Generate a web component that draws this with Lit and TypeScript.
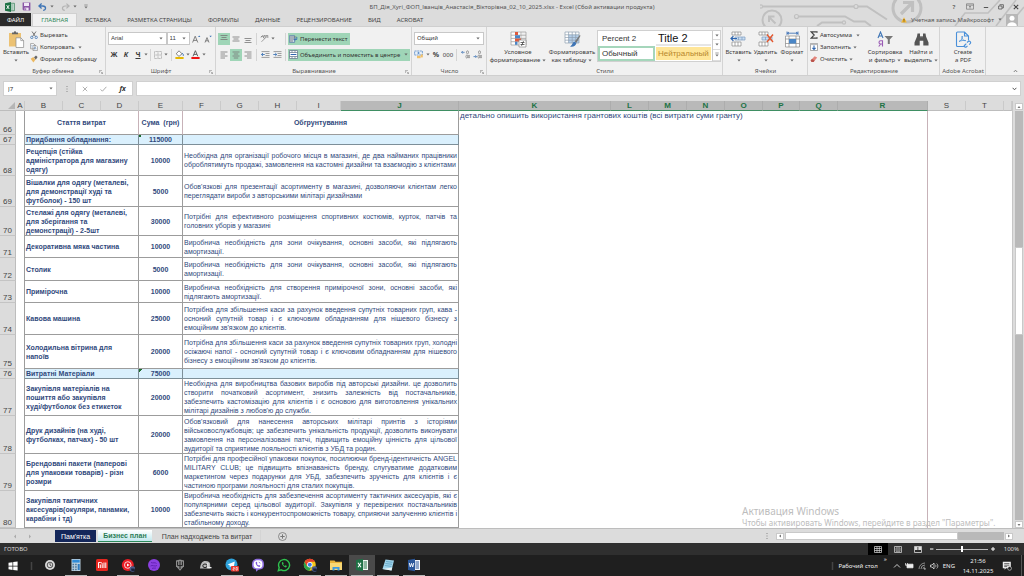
import { LitElement, html, svg, css, nothing } from "lit";
import { customElement, state } from "lit/decorators.js";
import { classMap } from "lit/directives/class-map.js";

const icon = (w: number, h: number, body: unknown) =>
  html`<svg class="ic" width=${w} height=${h} viewBox="0 0 ${w} ${h}" aria-hidden="true">${body}</svg>`;

const caret = icon(4, 3, svg`<path d="M0.4 .5h3.2L2 2.4z" fill="#666"/>`);

/* ---------- title bar ---------- */
const excelLogo = icon(10, 10, svg`<path d="M5 1.3h4.4v7.4H5z" fill="#fff" stroke="#217346" stroke-width=".7"/><path d="M6 3h2.6M6 5h2.6M6 7h2.6" stroke="#217346" stroke-width=".8"/><path d="M0 1.2 6 0v10L0 8.8z" fill="#1e7145"/><path d="M1.6 3.1 4.2 7M4.2 3.1 1.6 7" stroke="#fff" stroke-width=".9"/>`);
const save = icon(9, 9, svg`<path d="M.6.6h7.8v7.8H1.6l-1-1z" fill="#8a55a5"/><path d="M2 .8h5v3.2H2z" fill="#efe6f4"/><path d="M2.6 5.6h4v2.8h-4z" fill="#efe6f4"/><path d="M3.2 6.2h1v2h-1z" fill="#8a55a5"/>`);
const undo = icon(9, 8, svg`<path d="M3.6.6.9 3l2.7 2.4M1.2 3h3.6c3.6 0 3.6 4.2.4 4.4" fill="none" stroke="#3f75b5" stroke-width="1.3"/>`);
const redo = icon(9, 8, svg`<path d="M5.4.6 8.1 3 5.4 5.4M7.8 3H4.2C.6 3 .6 7.2 3.8 7.4" fill="none" stroke="#b4b4b4" stroke-width="1.2"/>`);
const customize = icon(4, 5, svg`<path d="M.3 1h3.4" stroke="#777" stroke-width=".7"/><path d="M.3 2.5h3.4L2 4.5z" fill="#777"/>`);
const ribbonOpts = icon(8, 7, svg`<path d="M.5.8h7v5.4h-7zM.5 2.200h7" fill="none" stroke="#777" stroke-width=".7"/><path d="M4 5.600V3.200M3 4l1-1 1 1" fill="none" stroke="#777" stroke-width=".7"/>`);
const minimize = icon(6, 6, svg`<path d="M.8 3.500h4.400" stroke="#555" stroke-width="1"/>`);
const restore = icon(6, 6, svg`<path d="M1.800 1.600V.7h3.600v3.200H4.200M.6 2h3.400v3H.6z" fill="none" stroke="#555" stroke-width=".8"/>`);
const closeX = icon(6, 6, svg`<path d="M.8.8l4.400 4.400M5.200.8.8 5.200" stroke="#444" stroke-width="1.1"/>`);
const warning = icon(6, 6, svg`<path d="M3 .3 5.800 5.600H.2z" fill="#f2b632"/><path d="M3 2v1.800M3 4.400v.7" stroke="#4a3500" stroke-width=".7"/>`);
const avatar = icon(12, 12, svg`<path d="M0 0h12v12H0z" fill="#b7b7b7"/><circle cx="6" cy="4.200" r="2.500" fill="#fff"/><path d="M1.200 12c0-5 9.600-5 9.600 0z" fill="#fff"/>`);

const circuit = html`<svg class="circuit" width="264" height="26" viewBox="0 0 264 26" aria-hidden="true">
  <g fill="none" stroke="#c0c0c0" stroke-width="2">
    <circle cx="1" cy="6.500" r="1.600" stroke-width="1.200"/><path d="M3 6.500h91M98 6.500h9l20 13"/><circle cx="96" cy="6.500" r="2" stroke-width="1.200"/>
    <circle cx="12" cy="20" r="9.500"/><path d="M15.500 23.500 9 17M9 22v-5.500h5.500"/>
    <circle cx="36.500" cy="16.500" r="2" stroke-width="1.200"/><path d="M39 16.500h46l9 5h11l6 4.500M57 26l5-3.500h20"/><circle cx="84" cy="22.500" r="1.600" stroke-width="1.200"/>
    <circle cx="147" cy="8" r="14" stroke-width="3"/><path d="m141 14 11-11M143 2.500h9.500V12" stroke-width="3.200"/>
    <path d="M195 26l10-13h23l12-13M236 26l20-26M248 26l16-19" stroke-width="1.600"/>
  </g></svg>`;

/* ---------- ribbon ---------- */
const paste = icon(17, 17, svg`<path d="M1 2h12v13.500H1z" fill="#ecc274"/><path d="M4 3.200V1.500h1.800a1.200 1.200 0 0 1 2.400 0H10v1.700z" fill="#666"/><path d="M8 6.800h4.800l2.800 2.800v6.900H8z" fill="#fff" stroke="#8a8a8a" stroke-width=".7"/><path d="M12.800 6.800v2.800h2.800" fill="none" stroke="#8a8a8a" stroke-width=".7"/>`);
const cut = icon(8, 8, svg`<path d="M2 .5 5.400 5.400M6 .5 2.600 5.400" stroke="#666" stroke-width=".9"/><circle cx="1.800" cy="6.400" r="1.200" fill="none" stroke="#3f75b5" stroke-width=".8"/><circle cx="6.200" cy="6.400" r="1.200" fill="none" stroke="#3f75b5" stroke-width=".8"/>`);
const copy = icon(8, 8, svg`<path d="M.6.6h3l1.400 1.400v3.800H.6zM3 2.400h3l1.400 1.400v3.800H3z" fill="#fff" stroke="#777" stroke-width=".6"/><path d="M3.900 4.400h2M3.900 5.800h2.600M1.400 2.500h1M1.400 4h1" stroke="#5b8cc7" stroke-width=".6"/>`);
const painter = icon(8, 8, svg`<path d="M.6 3.800 3.400 2l2 2.800-2 2.800z" fill="#ecb860"/><path d="m4 2.200 1.800 2.600L7.600 2 6 .4z" fill="#666"/>`);
const growA = icon(9, 8, svg`<path d="M.6 7.500 3.200 1.200 5.800 7.500M1.500 5.400h3.400" fill="none" stroke="#666" stroke-width=".8"/><path d="M6 2 7.200.6 8.400 2z" fill="#3f75b5"/>`);
const shrinkA = icon(9, 8, svg`<path d="M1 7.500 3 2.600 5 7.500M1.700 5.800h2.600" fill="none" stroke="#666" stroke-width=".8"/><path d="M5.400.8h2.400L6.600 2.200z" fill="#3f75b5"/>`);
const borders = icon(8, 8, svg`<path d="M.5.5h7v7h-7zM4 .5v7M.5 4h7" fill="none" stroke="#aaa" stroke-width=".8" stroke-dasharray="1 .4"/>`);
const fill = icon(9, 9, svg`<path d="m4 .8 3 3L4 6.400 1.200 3.800z" fill="#fff" stroke="#666" stroke-width=".8"/><path d="M7.200 3.200c1.400 1 1.400 2.400.8 2.800" stroke="#3f75b5" fill="none"/><path d="M.4 7h8.200v2H.4z" fill="#e6b800"/>`);
const fontColor = icon(9, 9, svg`<path d="M2 6.300 4.400.7l2.400 5.600M2.900 4.400h3" fill="none" stroke="#555" stroke-width=".9"/><path d="M.4 7h8.200v2H.4z" fill="#f01414"/>`);
const lines = (spec: [number, number, number][]) =>
  icon(8, 8, svg`${spec.map(([x, y, w]) => svg`<path d="M${x} ${y}h${w}" stroke="#777" stroke-width=".8"/>`)}`);
const alTop = lines([[0.5, 0.5, 7], [1.5, 2.5, 5], [0.5, 4.5, 7]]);
const alMid = lines([[0.5, 2, 7], [1.5, 4, 5], [0.5, 6, 7]]);
const alBot = lines([[0.5, 3.5, 7], [1.5, 5.5, 5], [0.5, 7.5, 7]]);
const alLeft = lines([[0.5, 1, 7], [0.5, 3, 4.5], [0.5, 5, 7], [0.5, 7, 4.5]]);
const alCenter = lines([[0.5, 1, 7], [1.8, 3, 4.4], [0.5, 5, 7], [1.8, 7, 4.4]]);
const alRight = lines([[0.5, 1, 7], [3, 3, 4.5], [0.5, 5, 7], [3, 7, 4.5]]);
const orient = icon(9, 9, svg`<path d="M1.500 7.800 7.500 1.800M7.800 4V1.500H5.300" fill="none" stroke="#888" stroke-width=".8"/><path d="m.8 3.200 2-1.400 1.400 2.600M3.800 1l2 2.400" fill="none" stroke="#555" stroke-width=".8"/>`);
const indent = (flip: boolean) => icon(9, 7, svg`<path d="M.5.6h8M4.500 2.500h4M4.500 4.500h4M.5 6.400h8" stroke="#888" stroke-width=".8"/><path d=${flip ? "M.3 3.500h3.400M2.200 2l1.600 1.500L2.200 5" : "M3.800 3.500H.5M2 2 .4 3.500 2 5"} fill="none" stroke="#3f75b5" stroke-width=".9"/>`);
const wrap = icon(9, 8, svg`<path d="M.5.5h5v7h-5z" fill="#c8d8e8" stroke="#5b7fa8" stroke-width=".7"/><path d="M1 2h6.500M1 4h4M1 6h3" stroke="#666" stroke-width=".7"/><path d="M7.800 2v2.500H5.500M6.500 3.200 5.200 4.500l1.300 1.300" fill="none" stroke="#2f66b0" stroke-width=".8"/>`);
const merge = icon(9, 9, svg`<path d="M.5.5h8v8h-8zM.5 2.500h8M.5 6.500h8M3 .5v2M6 .5v2M3 6.500v2M6 6.500v2" fill="#fff" stroke="#5f7388" stroke-width=".7"/><path d="M1.600 4.500h5.800" stroke="#2f66b0"/>`);
const currency = icon(10, 9, svg`<path d="M.6 1h7.800v4H.6z" fill="#e8f0f8" stroke="#5b8cc7" stroke-width=".8" stroke-dasharray="2 .6"/><circle cx="4.500" cy="3" r="1" fill="#5b8cc7"/><path d="M3 5.800h3.600v2.400H3z" fill="#f0c069"/><path d="M6.800 4.400h2v3h-2z" fill="#f0c069"/>`);
const decimals = (up: boolean) => icon(9, 9, svg`<path d=${up ? "M3.600 2.300H.6M1.800 1 .5 2.300l1.300 1.300" : "M.5 6.600h3M2.400 5.300l1.300 1.300-1.300 1.300"} fill="none" stroke="#3f75b5" stroke-width=".8"/><g fill="none" stroke="#777" stroke-width=".7"><ellipse cx="6.500" cy="2.300" rx="1" ry="1.500"/><ellipse cx="5.800" cy="6.600" rx=".9" ry="1.500"/><ellipse cx="8" cy="6.600" rx=".7" ry="1.500"/></g>`);
const condFmt = icon(17, 17, svg`<path d="M1 1h11v13H1z" fill="#fff"/><path d="M1 1h15v13H1zM1 4.200h15M1 7.400h15M1 10.700h15M6 1v13M11 1v13" fill="none" stroke="#9a9a9a" stroke-width=".7"/><path d="M5 1h3v3H5zM5 7.600h6v3H5z" fill="#e0593c"/><path d="M5 4.300h5v3H5zM5 10.800h2.500v3H5z" fill="#4b86c6"/><path d="M9 9h7v7H9z" fill="#fff" stroke="#888" stroke-width=".7"/><path d="M10.500 11.500h4M10.500 13.500h4M13.500 10.200l-2 4.600" stroke="#444" stroke-width=".8"/>`);
const fmtTable = icon(17, 17, svg`<path d="M1 1h14v11H1z" fill="#fff"/><path d="M4.600 3.800H15V12H4.600z" fill="#b5cfea"/><path d="M1 1h14v11H1zM1 3.800h14M1 6.500h14M1 9.200h14M4.600 1v11M8.200 1v11M11.700 1v11" fill="none" stroke="#8e9fb0" stroke-width=".7"/><path d="m15.800 4-5 6.500 1.700 1.200 4-7z" fill="#777"/><path d="M10.600 10.800c-2.600.6-2 3.600-4.600 4.700 3 .8 6-.6 6.400-3.400z" fill="#3f75b5"/>`);
const cellIcon = (kind: string) => icon(17, 17, svg`<path d="M2 1h9v3H2zM5 1v3M8 1v3M2 11h9v4H2zM5 11v4M8 11v4" fill="#fff" stroke="#888" stroke-width=".7"/><path d="M5 6h10v3H5zM8.500 6v3M12 6v3" fill="#c9ddf2" stroke="#7c9cc0" stroke-width=".7"/>${kind === "insert"
  ? svg`<path d="M7 7.500H1M3.400 5.200 1 7.500l2.400 2.300" fill="none" stroke="#2f66b0" stroke-width="1.200"/>`
  : svg`<path d="m10 3.500 6 7.500M16 3.500 10 11" stroke="#e4572e" stroke-width="1.400"/>`}`);
const formatIcon = icon(17, 17, svg`<path d="M1.500 5h14v11h-14z" fill="#fff"/><path d="M1.500 5h14v11h-14zM1.500 8h14M1.500 12.500h14M5 5v11M12 5v11" fill="none" stroke="#888" stroke-width=".7"/><path d="M5 8h7v4.500H5z" fill="#4b86c6"/><path d="M3 2.200h11M3 .5v3.400M14 .5v3.400M5 1 3.500 2.200 5 3.400M12 1l1.500 1.200L12 3.400" fill="none" stroke="#2f66b0" stroke-width=".8"/>`);
const sigma = icon(8, 8, svg`<path d="M7 1.800V.8H1.200L4.200 4 1.200 7.200H7v-1" fill="none" stroke="#444" stroke-width="1.200"/>`);
const fillDown = icon(8, 8, svg`<path d="M.5.5h7v7h-7z" fill="#fff" stroke="#888" stroke-width=".7"/><path d="M.5.5h7v1.600h-7z" fill="#bbb"/><path d="M4 2.600v3.800M2.400 4.800 4 6.400l1.600-1.600" fill="none" stroke="#2f66b0" stroke-width="1.100"/>`);
const eraser = icon(8, 8, svg`<path d="m.6 5.400 4-4.200L7.200 2.600 3.600 7H1.600z" fill="#e2867c"/><path d="m.6 5.400 1.300-1.400 2.800 1.600L3.600 7H1.600z" fill="#b9534c"/>`);
const sortIcon = icon(17, 17, svg`<path d="M1 7 3.500 1 6 7M2 5h3" fill="none" stroke="#3f75b5" stroke-width="1.100"/><path d="M5.500 15.500V9.800H3.600a1.600 1.600 0 0 0 0 3.200h1.900M3.700 13l-2 2.500" fill="none" stroke="#9a5bb5" stroke-width="1.100"/><path d="M7.500 5H16l-3.200 3.600V13h-2V8.600z" fill="#777"/>`);
const binoc = icon(17, 17, svg`<path d="M4.500 2.500H7v3h3v-3h2.500l.5 3 2.500 6v3h-5.200V9.800H6.700v4.700H1.500v-3L4 5.500z" fill="#555"/><path d="M7 5.800h3" stroke="#888"/>`);
const pdf = icon(17, 17, svg`<path d="M9 15.500H2.500a1 1 0 0 1-1-1V2a1 1 0 0 1 1-1h7l4 4v4.500M9.500 1v4h4" fill="none" stroke="#4a90d9" stroke-width="1.100"/><path d="M4 10.500c3-1.500 3.500-3.500 3.200-5.500-.8 3 1.300 5 3.600 4.600-2.500-.6-5 .2-6.800.9z" fill="none" stroke="#4a90d9" stroke-width=".8"/><path d="m9.500 14.500 1.800-1.800M12 11.500l1.200-1c1.500-1 3.200.8 2 2l-1 1.200M12.500 14.800l-1 1c-1.300 1-2.800-.3-2-1.800" fill="none" stroke="#4a90d9" stroke-width="1.100"/>`);
const launcher = icon(4, 4, svg`<path d="M.4 3V.4H3" fill="none" stroke="#888" stroke-width=".6"/><path d="M1.600 1.600l2 2M3.700 2v1.700H2" fill="none" stroke="#888" stroke-width=".6"/>`);

/* ---------- sheet ---------- */
interface Row { n: number; h: number; item: string[]; sum: string; why: string[]; head?: boolean; }
const rows: Row[] = [
  { n: 67, h: 10, item: ["Придбання обладнання:"], sum: "115000", why: [], head: true },
  { n: 68, h: 31, item: ["Рецепція (стійка", "адміністратора для магазину", "одягу)"], sum: "10000", why: ["Необхідна для організації робочого місця в магазині, де два найманих працівники", "оброблятимуть продажі, замовлення на кастомні дизайни та взаємодію з клієнтами"] },
  { n: 69, h: 31, item: ["Вішалки для одягу (металеві,", "для демонстрації худі та", "футболок) - 150 шт"], sum: "5000", why: ["Обов'язкові для презентації асортименту в магазині, дозволяючи клієнтам легко", "переглядати вироби з авторськими мілітарі дизайнами"] },
  { n: 70, h: 29, item: ["Стелажі для одягу (металеві,", "для зберігання та", "демонстрації) - 2-5шт"], sum: "30000", why: ["Потрібні для ефективного розміщення спортивних костюмів, курток, патчів та", "головних уборів у магазині"] },
  { n: 71, h: 22, item: ["Декоративна мяка частина"], sum: "10000", why: ["Виробнича необхідність для зони очікування, основні засоби, які підлягають", "амортизації."] },
  { n: 72, h: 23, item: ["Столик"], sum: "5000", why: ["Виробнича необхідність для зони очікування, основні засоби, які підлягають", "амортизації."] },
  { n: 73, h: 22, item: ["Примірочна"], sum: "10000", why: ["Виробнича необхідність для створення примірочної зони, основні засоби, які", "підлягають амортизації."] },
  { n: 74, h: 32, item: ["Кавова машина"], sum: "25000", why: ["Потрібна для збільшення каси за рахунок введення супутніх товарних груп, кава -", "осноний супутній товар і є ключовим обладнанням для нішевого бізнесу з", "емоційним зв'язком до клієнтів."] },
  { n: 75, h: 34, item: ["Холодильна вітрина для", "напоїв"], sum: "20000", why: ["Потрібна для збільшення каси за рахунок введення супутніх товарних груп, холодні", "осіжаючі напої - осноний супутній товар і є ключовим обладнанням для нішевого", "бізнесу з емоційним зв'язком до клієнтів."] },
  { n: 76, h: 10, item: ["Витратні Матеріали"], sum: "75000", why: [], head: true },
  { n: 77, h: 37, item: ["Закупівля матеріалів на", "пошиття або закупівля", "худі/футболок без етикеток"], sum: "20000", why: ["Необхідна для виробництва базових виробів під авторські дизайни. це дозволить", "створити початковий асортимент, знизить залежність від постачальників,", "забезпечить кастомізацію для клієнтів і є основою для виготовлення унікальних", "мілітарі дизайнів з любов'ю до служби."] },
  { n: 78, h: 38, item: ["Друк дизайнів (на худі,", "футболках, патчах) - 50 шт"], sum: "20000", why: ["Обов'язковий для нанесення авторських мілітарі принтів з історіями", "військовослужбовців; це забезпечить унікальність продукції, дозволить виконувати", "замовлення на персоналізовані патчі, підвищить емоційну цінність для цільової", "аудиторії та сприятиме лояльності клієнтів з УБД та родин."] },
  { n: 79, h: 37, item: ["Брендовані пакети (паперові", "для упаковки товарів) - різн", "розмри"], sum: "6000", why: ["Потрібні для професійної упаковки покупок, посилюючи бренд-ідентичність ANGEL", "MILITARY CLUB; це підвищить впізнаваність бренду, слугуватиме додатковим", "маркетингом через подарунки для УБД, забезпечить зручність для клієнтів і є", "частиною програми лояльності для сталих покупців."] },
  { n: 80, h: 37, item: ["Закупівля тактичних", "аксесуарів(окуляри, панамки,", "карабіни і тд)"], sum: "10000", why: ["Виробнича необхідність для забезпечення асортименту тактичних аксесуарів, які є", "популярними серед цільової аудиторії. Закупівля у перевірених постачальників", "забезпечить якість і конкурентоспроможність товару, сприяючи залученню клієнтів і", "стабільному доходу."] },
];
const cols: [string, number][] = [["A", 9], ["B", 38], ["C", 38], ["D", 38], ["E", 44], ["F", 38], ["G", 38], ["H", 38], ["I", 44], ["J", 118], ["K", 152], ["L", 38], ["M", 38], ["N", 38], ["O", 38], ["P", 37], ["Q", 38], ["R", 90], ["S", 38], ["T", 38]];

/* ---------- task bar ---------- */
const badge = svg`<circle cx="11.500" cy="11" r="2.800" fill="#4a5a8a"/><path d="M10 10.500h3.500l1 2.500h-4z" fill="#1b2238"/>`;
const tasks: { name: string; open?: boolean; active?: boolean; art: unknown }[] = [
  { name: "Поиск", art: svg`<circle cx="7" cy="7" r="5" fill="#d9d9d9"/><circle cx="7" cy="7" r="2.800" fill="none" stroke="#444" stroke-width=".9"/><path d="M7 5.200V7l1.500 1" stroke="#444" stroke-width=".9" fill="none"/>` },
  { name: "Калькулятор", open: true, art: svg`<path d="M2.500 1h9v12h-9z" fill="#b9cfdf"/><path d="M3.300 1.800h7.400v2.800H3.300z" fill="#2f8bd8"/><path d="M3.500 6.500h4.500M3.500 9h4.500M3.500 11.500h4.500" stroke="#4a7396" stroke-width="1.300" stroke-dasharray="1.600 1"/><path d="M8.700 6h2v6h-2z" fill="#2f7cc0"/>` },
  { name: "Mi", art: svg`<rect x="1" y="1" width="12" height="12" rx="1.500" fill="#e5261f"/><path d="M3.500 10V4.500h1.800c1.600 0 1.900.5 1.900 2V10M5.300 6.500V10M9 4.500V10M10.800 4.500V10" fill="none" stroke="#fff" stroke-width="1"/>` },
  { name: "Музыка", open: true, art: svg`<circle cx="6.800" cy="7" r="6" fill="#ec1c24"/><circle cx="6.800" cy="7" r="3.300" fill="none" stroke="#fff" stroke-width=".8"/><path d="M6 5.400v3.200L8.600 7z" fill="#fff"/>${badge}` },
  { name: "Браузер", art: svg`<circle cx="7" cy="7" r="6" fill="#8b3fe0"/><path d="M4 4.500c2 1 4-.5 5.500 1M3.500 8c2-1.500 4 1 6.500-.5M5 10.500c1.500-1 3 .3 4-.6" fill="none" stroke="#6421b5"/>` },
  { name: "Танки", art: svg`<path d="M3 2.500 7 1.500l4 1v5.800L7 12.800 3 8.300z" fill="#8e8e8e"/><path d="M7 3v8M4.600 3.600v4h4.800v-4" fill="none" stroke="#222" stroke-width="1"/>` },
  { name: "Аудио", art: svg`<path d="M1 10.500c.5-5 2-7.500 5.500-7.500 3.200 0 4.700 1.500 4.700 4v3.500z" fill="#b9b9b9"/><ellipse cx="6" cy="7.800" rx="2.200" ry="1.800" fill="none" stroke="#222"/><path d="M8.800 5v4.700h3.700" fill="none" stroke="#eee" stroke-width="1.200"/>` },
  { name: "Telegram", open: true, art: svg`<circle cx="6.500" cy="6.500" r="6" fill="#2fa3dc"/><path d="m2.600 6.400 7.200-3L8.600 10 6 8.200 4.800 9.300l-.2-2z" fill="#fff"/><rect x="6" y="8" width="8" height="5.500" rx="1" fill="#e8372e"/><path d="M8 9.600h1.400v1.200H8v1.300h1.500M11 9.500h1.300v2.600H11z" fill="none" stroke="#fff" stroke-width=".6"/>` },
  { name: "Viber", art: svg`<path d="M7 .8c4.500 0 6 1.800 6 5.700 0 4-1.800 5-5.500 5.200L5 13.800v-2.400C2 10.800 1 9.800 1 6.500 1 2.600 2.600.8 7 .8z" fill="#8f6fe0"/><path d="M7 2.300c3.500 0 4.400 1.200 4.400 4.200S10.300 10.300 7 10.300 2.600 9.500 2.600 6.500 3.600 2.300 7 2.300z" fill="#fff"/><path d="M4.800 4c-.6 2.300 1.600 4.800 3.800 5l.7-1.200-1.300-.9-.8.500-1.300-1.500.5-.8-.7-1.300zM7.300 3.800c1.500.1 2.200 1 2.200 2.300" fill="#7a55d8"/>` },
  { name: "WhatsApp", art: svg`<path d="M1.300 12.700 2.200 9.600a5.500 5.500 0 1 1 2.100 2.200z" fill="#1c1c1c" stroke="#2fc14e" stroke-width="1.400"/><path d="M5 4.200c-.7 2 1.800 5 4 5.200l1-1.300-1.500-.9-.8.700c-.8-.3-1.300-.9-1.600-1.600l.6-.7-.7-1.500z" fill="#2fc14e"/>` },
  { name: "Chrome", open: true, art: svg`<circle cx="6.800" cy="6.800" r="6" fill="#f5c518"/><path d="M1.600 3.800A6 6 0 0 1 12 3.800H6.800z" fill="#e33b2e"/><path d="M1.600 3.800A6 6 0 0 0 6.300 12.800L8.500 8.500 4 8z" fill="#2ba24c"/><path d="M1.600 3.800 4.200 8.200 7 4z" fill="#e33b2e"/><circle cx="6.800" cy="6.800" r="2.700" fill="#fff"/><circle cx="6.800" cy="6.800" r="2" fill="#3b7de8"/>${badge}` },
  { name: "Проводник", open: true, art: svg`<path d="M1 2.500h4.500l1 1.300H13v8H1z" fill="#e8b33a"/><path d="M1 5h12v7H1z" fill="#f8d875"/><path d="M3.500 9h7v3.500h-2v-1.700h-3v1.700h-2z" fill="#3d9ae0"/>` },
  { name: "Excel", open: true, active: true, art: svg`<path d="M7 2h6v10H7z" fill="#f3f8f4"/><path d="M8.500 4h3.500M8.500 6h3.500M8.500 8h3.500M8.500 10h3.500" stroke="#217346" stroke-width="1"/><path d="M1 2 8 .8v12.400L1 12z" fill="#1e7145"/><path d="m3 4.800 3 4.400M6 4.800 3 9.200" stroke="#fff" stroke-width="1.100"/>` },
  { name: "Блокнот", open: true, art: svg`<path d="M4.500 1.500 13 2.500l-2.500 10L1.500 11z" fill="#9fd3ea"/><path d="M5 3.500l6.500.8M4.400 5.500l6.600.8M3.800 7.500l6.500.9" stroke="#5c9fc0" stroke-width=".8"/><path d="m1.500 11 9 1.500.8-3z" fill="#e9f3f7"/>` },
  { name: "Word", open: true, art: svg`<path d="M7 2h6v10H7z" fill="#f3f6fb"/><path d="M8.500 4h3.500M8.500 6h3.500M8.500 8h3.500M8.500 10h3.500" stroke="#2b579a" stroke-width="1"/><path d="M1 2 8 .8v12.400L1 12z" fill="#2b579a"/><path d="m2.300 5 1 4 1.200-3.600L5.700 9l1-4" fill="none" stroke="#fff" stroke-width=".9"/>` },
];

@customElement("app-root")
export class AppRoot extends LitElement {
  @state() private sheet = 1;
  @state() private tab = 0;

  static styles = css`
    :host { display: flex; flex-direction: column; height: 100vh; overflow: hidden; position: relative;
      background: #dcdcdc; color: #3a3a3a; font: 6px/8px "Noto Sans", "Open Sans", sans-serif; }
    * { box-sizing: border-box; }
    button, input, select { font: inherit; color: inherit; border: 0; padding: 0; margin: 0; background: none; border-radius: 0; appearance: none; outline: none; }
    button { display: flex; align-items: center; justify-content: center; white-space: nowrap; }
    a { color: inherit; text-decoration: none; }
    .ic { display: block; flex: none; }
    .grow { flex: 1; }
    .row { display: flex; align-items: center; }

    .top { position: relative; flex: none; }
    .circuit { position: absolute; right: 0; top: 0; }
    .title { position: relative; display: grid; grid-template-columns: 1fr auto 1fr; align-items: center; height: 13px; padding: 0 5px; }
    .title h1 { margin: 0; font: inherit; color: #555; }
    .quick { gap: 7px; }
    .quick button { gap: 3px; }
    .win { justify-content: flex-end; gap: 9px; }
    .win button { min-width: 6px; font-weight: 700; color: #666; }
    .tabs { position: relative; display: flex; height: 13px; align-items: stretch; }
    .tabs button { padding: 0 8px; color: #444; }
    .tabs .file { background: #2b2b2b; color: #fff; padding: 0 7px; margin-right: 1px; }
    .tabs .on { background: #f1f1f1; color: #2f8558; border: 1px solid #d0d0d0; border-bottom: 0; }
    .acct { gap: 4px; padding-right: 6px; color: #555; }

    .ribbon { display: grid; flex: none; height: 50px; background: #f1f1f1; border-top: 1px solid #cfcfcf; border-bottom: 1px solid #cfcfcf;
      grid-template-columns: 106px 110px 196px 75px 236px 85px 132px 46px 1fr; }
    .group { display: flex; flex-direction: column; border-right: 1px solid #d4d4d4; padding: 2px 1px 0 2px; min-width: 0; }
    .body { display: flex; flex: 1; min-height: 0; }
    .cap { position: relative; display: flex; justify-content: center; height: 8px; white-space: nowrap; color: #555; }
    .cap button { position: absolute; right: 1px; top: 3px; }
    .big { flex-direction: column; justify-content: flex-start; line-height: 8px; padding-top: 2px; }
    .big span { display: flex; align-items: center; gap: 2px; height: 8px; }
    .stack { display: flex; flex-direction: column; gap: 4px; padding-top: 2px; align-items: flex-start; }
    .stack button { height: 8px; gap: 2px; }
    .two { display: flex; flex-direction: column; gap: 3px; padding-top: 3px; width: 100%; }
    .two .row { height: 13px; }
    .pick { display: grid; align-items: center; background: #fff; border: 1px solid #c8c8c8; height: 13px; }
    .pick select, .pick .ic { grid-area: 1 / 1; }
    .pick .ic { justify-self: end; margin-right: 3px; pointer-events: none; }
    .pick select { width: 100%; padding-left: 2px; height: 11px; line-height: 11px; }
    .arial { font-family: "Liberation Sans", Arial, sans-serif; }
    .w59 { width: 60px; } .w24 { width: 24px; } .w70 { width: 70px; }
    .t { width: 12px; height: 12px; flex: none; }
    .t.c { width: 16px; gap: 2px; }
    .b { font-weight: 700; font-size: 7px; }
    .it { font-style: italic; }
    .u { text-decoration: underline; }
    .sep { width: 1px; height: 12px; background: #d4d4d4; margin: 0 2px; flex: none; }
    .on-bg { background: #9fd5b7; }
    .wide { height: 12px; gap: 2px; padding: 0 2px 0 1px; justify-content: flex-start; color: #333; }
    .gallery { display: grid; grid-template: 15px 15px / 57px 57px 8px; height: 32px; margin: 1px 0 0; background: #fff; border: 1px solid #d0d0d0; flex: none; }
    .gallery button { justify-content: flex-start; padding-left: 4px; font: 8px/10px "Liberation Sans", Arial, sans-serif; color: #333; }
    .gallery .t2 { font-size: 11px; color: #111; border-bottom: 2px solid #e6e6e6; margin: 0 1px; padding-left: 2px; }
    .gallery .norm { border: 2px solid #a5d6bb; padding-left: 2px; }
    .gallery .neut { background: #ffe699; color: #b8862c; margin: 1px 1px; padding-left: 2px; }
    .gal { grid-area: 1 / 3 / 3 / 4; display: grid; border-left: 1px solid #ccc; }
    .gallery .gal button { padding: 0; justify-content: center; border-bottom: 1px solid #ddd; }
    .last { display: flex; align-items: flex-end; justify-content: flex-end; padding: 0 6px 2px; }

    .fbar { display: flex; flex: none; height: 25px; padding: 5px 3px; gap: 3px; color: #333; }
    .fbar > * { height: 15px; }
    .box { background: #fff; border: 1px solid #d0d0d0; }
    .name { display: flex; align-items: center; width: 54px; padding: 0 3px; }
    .name input { width: 40px; flex: 1; padding-left: 1px; }
    .dots { width: 12px; }
    .fx { display: flex; align-items: center; justify-content: space-around; width: 58px; }
    .formula { flex: 1; display: flex; align-items: center; padding-right: 3px; }
    .formula input { flex: 1; }

    .work { display: flex; flex: 1; min-height: 0; position: relative; }
    .sheet { flex: 1; min-width: 0; overflow: hidden; background: #fff; border-right: 1px solid #c6c6c6; }
    table { width: 100%; table-layout: fixed; border-collapse: separate; border-spacing: 0; font: 7px/9px "Liberation Sans", Arial, sans-serif; color: #30497c; }
    th, td { padding: 0; overflow: hidden; white-space: nowrap; }
    .ch { height: 10px; background: #dcdcdc; color: #444; font: 8px/9px "Liberation Sans", Arial, sans-serif; border-right: 1px solid #cacaca; border-bottom: 1px solid #bdbdbd; }
    .ch.sel { background: #b9b9b9; color: #217346; font-weight: 700; border-right-color: #adadad; border-bottom-color: #3f8f63; }
    .corner { border-right: 0; }
    .corner svg { display: block; margin-left: auto; }
    .rh { background: #dcdcdc; color: #444; font: 8px/8px "Liberation Sans", Arial, sans-serif; vertical-align: bottom; border-right: 1px solid #bdbdbd; border-bottom: 1px solid #c4c4c4; text-align: center; }
    .edge { border-right: 1px solid #9c9c9c; }
    .cell { border-right: 1px solid #9c9c9c; border-bottom: 1px solid #9c9c9c; vertical-align: middle; }
    .item { text-align: left; font-weight: 700; padding-left: 1px; }
    .sum { text-align: center; font-weight: 700; position: relative; }
    .mark { position: absolute; left: 0; top: 0; width: 3px; height: 3px; background: linear-gradient(135deg, #1e6b2e 50%, transparent 50%); }
    .why { padding: 0 1px; }
    .hd { text-align: center; font-weight: 700; }
    .rose { border-right-color: #c7b2b8; }
    .head .cell { background: #daf0fd; border-color: #7d8f99; }
    .ln { display: block; }
    .why .ln { text-align: justify; text-align-last: justify; }
    .why .ln:last-child { text-align-last: left; }
    .note { font-size: 8px; vertical-align: top; text-align: left; border-right: 1px solid #c7b2b8; padding-left: 1px; }
    .free { border-right: 1px solid #c7b2b8; }
    .vbar { width: 11px; display: flex; flex-direction: column; align-items: center; gap: 1px; padding: 2px 0 0; flex: none; }
    .sb { width: 8px; height: 7px; background: #fff; border: 1px solid #c9c9c9; flex: none; }
    .vtrack { flex: 1; width: 8px; background: #b9b9b9; padding-top: 136px; }
    .vthumb { height: 88px; background: #fff; border: 1px solid #c9c9c9; }
    .mark-win { position: absolute; right: 27px; bottom: 0; width: 255px; color: #bdbdbd; white-space: nowrap; font-size: 8px; line-height: 10px; margin: 0; pointer-events: none; }
    .mark-win strong { display: block; font-weight: 400; font-size: 10px; line-height: 14px; }

    .sheets { display: flex; align-items: center; flex: none; height: 15px; border-top: 1px solid #bdbdbd; padding-right: 11px; font: 7px/9px "Liberation Sans", Arial, sans-serif; }
    .nav { width: 55px; display: flex; gap: 11px; padding-left: 13px; }
    .sheets .st { height: 12px; padding: 0 6px; color: #444; }
    .sheets .navy { background: #14275a; color: #fff; margin-right: 2px; }
    .sheets .cur { background: linear-gradient(#fff, #c3e8ee); color: #2c7d56; font-weight: 700; border-bottom: 1px solid #2c8a5b; margin-right: 4px; padding: 0 5px; }
    .hbar { display: flex; align-items: center; width: 237px; gap: 1px; }
    .htrack { flex: 1; display: flex; height: 8px; background: #b9b9b9; }
    .hthumb { width: 79%; background: #fff; border: 1px solid #c9c9c9; }

    .status { display: flex; align-items: center; flex: none; height: 12px; background: #2f2f2f; color: #ddd; padding: 0 5px 0 4px; }
    .view { width: 20px; height: 12px; }
    .view.on { background: #000; }
    .zoom { width: 52px; height: 6px; margin: 0 2px; background: linear-gradient(#bbb, #bbb) center / 100% 1px no-repeat; }
    .zoom::-webkit-slider-thumb { appearance: none; width: 2px; height: 6px; background: #fff; }
    .status .pc { margin-left: 8px; }

    .taskbar { display: flex; align-items: stretch; flex: none; height: 21px; background: #1f1f1f; color: #eee; }
    .start { width: 25px; }
    .gap { width: 12px; display: flex; align-items: center; justify-content: center; color: #444; }
    .task { width: 26px; border-bottom: 1px solid transparent; position: relative; }
    .task.open::after { content: ""; position: absolute; left: 2px; right: 2px; bottom: -1px; height: 1px; background: #b8b8b8; }
    .task.active { background: #4a4a4a; }
    .tray { gap: 4px; }
    .tray .desk { margin-right: 2px; }
    .up { align-self: flex-start; margin-right: 2px; }
    .clock { text-align: center; line-height: 10px; margin: 0 4px 0 3px; width: 32px; }
    .peek { width: 3px; border-left: 1px solid #555; margin-left: 9px; }
  `;

  private group(cap: string, body: unknown, launch = false) {
    return html`<section class="group" aria-label=${cap}><div class="body">${body}</div>
      <div class="cap">${cap}${launch ? html`<button aria-label="Параметры: ${cap}">${launcher}</button>` : nothing}</div></section>`;
  }
  private big(art: unknown, a: string, b: string, w: number, drop = true) {
    return html`<button class="big" style="width:${w}px">${art}<span>${a}</span><span>${b}${drop ? caret : nothing}</span></button>`;
  }

  private top() {
    const names = ["ГЛАВНАЯ", "ВСТАВКА", "РАЗМЕТКА СТРАНИЦЫ", "ФОРМУЛЫ", "ДАННЫЕ", "РЕЦЕНЗИРОВАНИЕ", "ВИД", "ACROBAT"];
    return html`<header class="top">${circuit}
      <div class="title">
        <div class="row quick">${excelLogo}<button aria-label="Сохранить">${save}</button>
          <button aria-label="Отменить">${undo}${caret}</button><button aria-label="Вернуть">${redo}${caret}</button>
          <button aria-label="Настройка панели">${customize}</button></div>
        <h1>БП_Дія_Хугі_ФОП_Іванців_Анастасія_Вікторівна_02_10_2025.xlsx - Excel (Сбой активации продукта)</h1>
        <div class="row win"><button>?</button><button aria-label="Параметры ленты">${ribbonOpts}</button>
          <button aria-label="Свернуть">${minimize}</button><button aria-label="Восстановить">${restore}</button><button aria-label="Закрыть">${closeX}</button></div>
      </div>
      <nav class="tabs"><button class="file">ФАЙЛ</button>
        ${names.map((n, i) => html`<button class=${classMap({ on: i === this.tab })} @click=${() => (this.tab = i)}>${n}</button>`)}
        <span class="grow"></span>
        <div class="row acct">${warning}<a href="#">Учетная запись Майкрософт</a>${caret}${avatar}</div>
      </nav></header>`;
  }

  private ribbon() {
    return html`<div class="ribbon">
      ${this.group("Буфер обмена", html`${this.big(paste, "Вставить", "", 28)}
        <div class="stack"><button>${cut}Вырезать</button><button>${copy}Копировать&nbsp; ${caret}</button><button>${painter}Формат по образцу</button></div>`, true)}
      ${this.group("Шрифт", html`<div class="two">
        <div class="row"><label class="pick w59"><select class="arial" aria-label="Шрифт"><option>Arial</option></select>${caret}</label>
          <label class="pick w24"><select class="arial" aria-label="Размер"><option>11</option></select>${caret}</label>
          <button class="t" aria-label="Увеличить шрифт">${growA}</button><button class="t" aria-label="Уменьшить шрифт">${shrinkA}</button></div>
        <div class="row"><button class="t b">Ж</button><button class="t b it">К</button><button class="t b u">Ч</button>${caret}<span class="sep"></span>
          <button class="t c" aria-label="Границы">${borders}${caret}</button><span class="sep"></span>
          <button class="t c" aria-label="Заливка">${fill}${caret}</button><button class="t c" aria-label="Цвет текста">${fontColor}${caret}</button></div></div>`, true)}
      ${this.group("Выравнивание", html`<div class="two">
        <div class="row"><button class="t on-bg" aria-label="По верхнему краю">${alTop}</button><button class="t" aria-label="По середине">${alMid}</button><button class="t" aria-label="По нижнему краю">${alBot}</button>
          <span class="sep"></span><button class="t c" aria-label="Ориентация">${orient}${caret}</button><span style="width:8px"></span><span class="sep"></span>
          <button class="wide on-bg">${wrap}Перенести текст</button></div>
        <div class="row"><button class="t" aria-label="По левому краю">${alLeft}</button><button class="t on-bg" aria-label="По центру">${alCenter}</button><button class="t" aria-label="По правому краю">${alRight}</button>
          <span class="sep"></span><button class="t" aria-label="Уменьшить отступ">${indent(false)}</button><button class="t" aria-label="Увеличить отступ">${indent(true)}</button><span class="sep"></span>
          <button class="wide on-bg">${merge}Объединить и поместить в центре&nbsp; ${caret}</button></div></div>`, true)}
      ${this.group("Число", html`<div class="two">
        <label class="pick w70"><select aria-label="Числовой формат"><option>Общий</option></select>${caret}</label>
        <div class="row"><button class="t c" aria-label="Финансовый формат">${currency}${caret}</button><button class="t b">%</button><button class="t">000</button><span class="sep"></span>
          <button class="t" aria-label="Увеличить разрядность">${decimals(true)}</button><button class="t" aria-label="Уменьшить разрядность">${decimals(false)}</button></div></div>`, true)}
      ${this.group("Стили", html`${this.big(condFmt, "Условное", "форматирование", 58)}${this.big(fmtTable, "Форматировать", "как таблицу", 50)}
        <div class="gallery"><button>Percent 2</button><button class="t2">Title 2</button>
          <div class="gal"><button aria-label="Вверх">${caret}</button><button aria-label="Вниз">${caret}</button><button aria-label="Все стили">${customize}</button></div>
          <button class="norm">Обычный</button><button class="neut">Нейтральный</button></div>`)}
      ${this.group("Ячейки", html`${this.big(cellIcon("insert"), "Вставить", "", 27)}${this.big(cellIcon("delete"), "Удалить", "", 27)}${this.big(formatIcon, "Формат", "", 26)}`)}
      ${this.group("Редактирование", html`<div class="stack" style="width:56px"><button>${sigma}Автосумма&nbsp; ${caret}</button><button>${fillDown}Заполнить${caret}</button><button>${eraser}Очистить${caret}</button></div>
        ${this.big(sortIcon, "Сортировка", "и фильтр", 38)}${this.big(binoc, "Найти и", "выделить", 34)}`)}
      ${this.group("Adobe Acrobat", this.big(pdf, "Create", "a PDF", 43, false))}
      <div class="last"><button aria-label="Свернуть ленту">${icon(5, 4, svg`<path d="M.8 3 2.500 1.200 4.200 3" fill="none" stroke="#666" stroke-width=".8"/>`)}</button></div>
    </div>`;
  }

  private formula() {
    return html`<div class="fbar">
      <div class="box name"><input aria-label="Поле имени" .value=${"J7"} />${caret}</div>
      <div class="row dots">${icon(12, 8, svg`<path d="M7 1v1M7 3.500v1M7 6v1" stroke="#888" stroke-width="1"/>`)}</div>
      <div class="box fx"><button aria-label="Отмена">${icon(6, 6, svg`<path d="m.8.8 4.400 4.400M5.200.8.8 5.200" stroke="#aaa" stroke-width=".9"/>`)}</button>
        <button aria-label="Ввод">${icon(7, 6, svg`<path d="m.6 3.400 1.800 1.800L6.400.8" fill="none" stroke="#aaa" stroke-width="1"/>`)}</button><button class="b it">fx</button></div>
      <div class="box formula"><input aria-label="Строка формул" />${icon(5, 4, svg`<path d="M.6.8 2.500 2.800 4.400.8" fill="none" stroke="#555" stroke-width="1"/>`)}</div>
    </div>`;
  }

  private table() {
    const text = (a: string[]) => a.map((l) => html`<span class="ln">${l}</span>`);
    return html`<table>
      <colgroup><col style="width:16px" />${cols.map(([, w]) => html`<col style="width:${w}px" />`)}<col /></colgroup>
      <thead><tr><th class="ch corner">${icon(10, 9, svg`<path d="M9 1v7H2z" fill="#b5b5b5"/>`)}</th>
        ${cols.map(([c], i) => html`<th scope="col" class=${classMap({ ch: true, sel: i >= 9 && i <= 17 })}>${c}</th>`)}<th class="ch"></th></tr></thead>
      <tbody>
        <tr style="height:24px"><th class="rh" scope="row">66</th><td class="edge"></td><td class="cell hd rose" colspan="3">Стаття витрат</td>
          <td class="cell hd rose">Сума &nbsp;(грн)</td><td class="cell hd" colspan="5">Обгрунтування</td>
          <td class="note" colspan="8">детально опишить використання грантових коштів (всі витрати суми гранту)</td><td colspan="3"></td></tr>
        ${rows.map((r, i) => html`<tr class=${r.head ? "head" : ""} style="height:${r.h}px"><th class="rh" scope="row">${r.n}</th><td class="edge"></td>
          <td class="cell item" colspan="3">${text(r.item)}</td>
          <td class="cell sum">${r.head ? html`<i class="mark"></i>` : nothing}${r.sum}</td>
          <td class="cell why" colspan="5">${text(r.why)}</td>
          ${i === 0 ? html`<td class="free" colspan="8" rowspan=${rows.length}></td><td colspan="3" rowspan=${rows.length}></td>` : nothing}</tr>`)}
      </tbody></table>`;
  }

  private arrow(d: string, name: string) {
    return html`<button class="sb" aria-label=${name}>${icon(4, 4, svg`<path d=${d} fill="#777"/>`)}</button>`;
  }

  render() {
    return html`${this.top()}${this.ribbon()}${this.formula()}
      <main class="work"><div class="sheet">${this.table()}</div>
        <div class="vbar">${this.arrow("M.5 3h3L2 1z", "Вверх")}<div class="vtrack"><div class="vthumb"></div></div>${this.arrow("M.5 1h3L2 3z", "Вниз")}</div>
        <p class="mark-win"><strong>Активация Windows</strong>Чтобы активировать Windows, перейдите в раздел "Параметры".</p></main>
      <div class="sheets"><div class="nav"><button aria-label="Назад">${icon(4, 5, svg`<path d="M3 .5v4L1 2.500z" fill="#aaa"/>`)}</button><button aria-label="Вперед">${icon(4, 5, svg`<path d="M1 .5v4l2-2z" fill="#aaa"/>`)}</button></div>
        ${["Пам'ятка", "Бизнес план", "План надходжень та витрат"].map((n, i) => html`<button class=${classMap({ st: true, navy: i === 0, cur: i === this.sheet })} @click=${() => (this.sheet = i)}>${n}</button>`)}
        <span class="sep"></span><span style="width:15px"></span>
        <button aria-label="Новый лист">${icon(9, 9, svg`<circle cx="4.500" cy="4.500" r="4" fill="none" stroke="#777" stroke-width=".8"/><path d="M4.500 2.300v4.400M2.300 4.500h4.400" stroke="#777" stroke-width="1"/>`)}</button>
        <span class="grow"></span>${icon(12, 8, svg`<path d="M3 1v1M3 3.500v1M3 6v1" stroke="#888" stroke-width="1"/>`)}
        <div class="hbar">${this.arrow("M3 .5v3L1 2z", "Влево")}<div class="htrack"><div class="hthumb"></div></div>${this.arrow("M1 .5v3L3 2z", "Вправо")}</div></div>
      <div class="status"><span>ГОТОВО</span><span class="grow"></span>
        <button class="view on" aria-label="Обычный">${icon(8, 7, svg`<path d="M.5.5h7v6h-7zM.5 2.500h7M.5 4.500h7M3 .5v6M5.300.5v6" fill="none" stroke="#ddd" stroke-width=".7"/>`)}</button>
        <button class="view" aria-label="Разметка страницы">${icon(8, 7, svg`<path d="M.5.5h7v6h-7z" fill="none" stroke="#ccc" stroke-width=".8"/><path d="M2 1.800h4v3.600H2zM2.500 3h3M2.500 4.200h3" fill="none" stroke="#ccc" stroke-width=".6"/>`)}</button>
        <button class="view" aria-label="Страничный">${icon(8, 7, svg`<path d="M.5.5h7v6h-7z" fill="none" stroke="#ddd" stroke-width=".8"/><path d="M1 1h2.500v3H1zM4.300 1H7v3H4.300z" fill="#ddd"/>`)}</button>
        ${icon(6, 6, svg`<path d="M2 3h3.400" stroke="#fff" stroke-width="1"/>`)}<input class="zoom" type="range" min="10" max="190" value="100" aria-label="Масштаб" />${icon(6, 6, svg`<path d="M1 3h4M3 1v4" stroke="#fff" stroke-width="1"/>`)}<span class="pc">100%</span></div>
      <footer class="taskbar"><button class="start" aria-label="Пуск">${icon(10, 10, svg`<path d="M.5 1.800 4.500 1.200v3.500h-4zM5.200 1.100 9.600.5v4.200H5.200zM.5 5.400h4v3.500l-4-.6zM5.200 5.400h4.400v4.200L5.200 9z" fill="#fff"/>`)}</button>
        <span class="gap">${icon(3, 8, svg`<path d="M1.500 0v8" stroke="#444" stroke-width="1.500"/>`)}</span>
        ${tasks.map((t) => html`<button class=${classMap({ task: true, open: !!t.open, active: !!t.active })} aria-label=${t.name}>${icon(14, 14, t.art)}</button>`)}
        <span class="grow"></span>
        <div class="row tray">${icon(3, 8, svg`<path d="M1.500 0v8" stroke="#444" stroke-width="1.500"/>`)}<span class="desk">Рабочий стол</span><span class="up">»</span>
          ${icon(8, 6, svg`<path d="m1 4.500 3-3 3 3" fill="none" stroke="#ddd" stroke-width=".9"/>`)}
          ${icon(9, 7, svg`<path d="M2 2.200h6v3.600H2z" fill="#eee" stroke="#eee" stroke-width=".8"/><path d="M.4 1v2.200h2V1" fill="none" stroke="#eee" stroke-width=".8"/>`)}
          ${icon(8, 8, svg`<path d="M1 7A6 6 0 0 1 7 1M3 7a4 4 0 0 1 4-4M5 7a2 2 0 0 1 2-2" fill="none" stroke="#999" stroke-width=".9"/><path d="M6.200 6.200h1.300v1.300H6.200z" fill="#eee"/>`)}
          ${icon(9, 8, svg`<path d="M.5 3h1.500L4 1v6L2 5H.5z" fill="none" stroke="#ddd" stroke-width=".8"/><path d="M5.300 2.700c.8.8.8 1.800 0 2.600M6.700 1.500c1.600 1.600 1.600 3.400 0 5" fill="none" stroke="#ddd" stroke-width=".7"/>`)}
          <span>ENG</span><time class="clock">21:56<br />14.11.2025</time>
          ${icon(10, 10, svg`<path d="M.8.8h8v6.400H4L2.600 8.800V7.200H.8z" fill="#eee"/><path d="M2.200 2.600h5.200M2.200 4.200h5.200M2.200 5.600h3" stroke="#333" stroke-width=".7"/><circle cx="7.600" cy="7.400" r="1.900" fill="#1f1f1f" stroke="#ddd" stroke-width=".6"/>`)}
        </div><span class="peek"></span></footer>`;
  }
}
